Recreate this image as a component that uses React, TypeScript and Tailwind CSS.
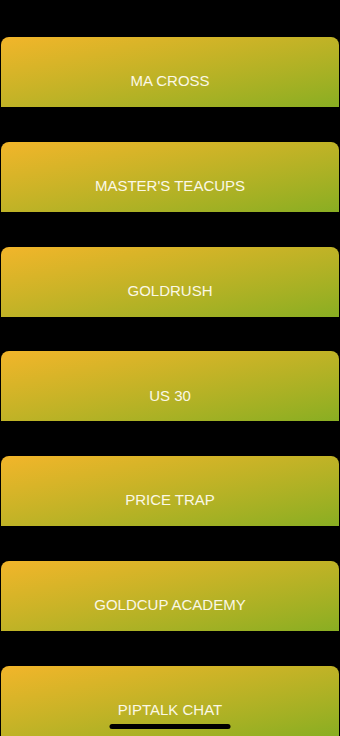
const items = [
  'MA CROSS',
  "MASTER'S TEACUPS",
  'GOLDRUSH',
  'US 30',
  'PRICE TRAP',
  'GOLDCUP ACADEMY',
  'PIPTALK CHAT',
];

export default function App() {
  return (
    <div className="relative h-[736px] w-[340px] overflow-hidden bg-black font-['Liberation_Sans',Arial,sans-serif]">
      <div className="flex flex-col gap-[34.8px] px-px pt-[37px]">
        {items.map((label) => (
          <button
            key={label}
            className="flex h-[70px] w-full shrink-0 items-center justify-center rounded-t-lg bg-gradient-to-br from-[#f2b52a] to-[#89ae22] pt-[19px] text-[15px] text-[#fbf8e6]"
          >
            {label}
          </button>
        ))}
      </div>
      <div className="absolute bottom-[7px] left-1/2 h-[5px] w-[121px] -translate-x-1/2 rounded-full bg-black" />
    </div>
  );
}
